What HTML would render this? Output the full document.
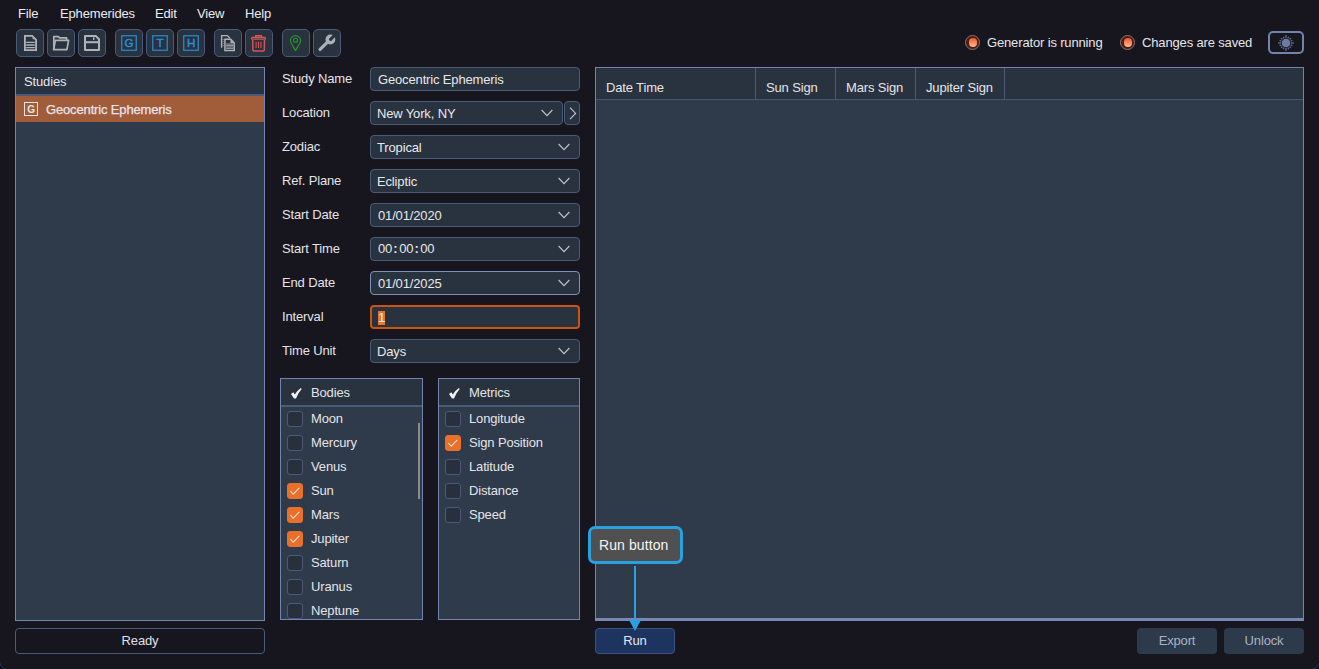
<!DOCTYPE html>
<html><head><meta charset="utf-8">
<style>
*{box-sizing:border-box;margin:0;padding:0}
html,body{width:1319px;height:669px;overflow:hidden;background:#17161e;font-family:"Liberation Sans",sans-serif;font-size:13px;color:#e6e6ea;letter-spacing:-0.15px}
.a{position:absolute}
.menu{top:6px;height:16px;line-height:16px;font-size:13px;color:#ececf0}
.tb{position:absolute;top:29px;width:28px;height:28px;border:1px solid #4b5a78;border-radius:5px;background:#29323f}
.tb svg{position:absolute;left:0;top:0}
.lbl{position:absolute;left:282px;font-size:13px;line-height:16px;color:#e4e4e8}
.inp{position:absolute;left:370px;width:210px;height:24px;border:1px solid #4b5a78;border-radius:4px;background:#29323f;font-size:13px;line-height:24px;padding-left:7px;color:#e8e8ec}
.chev{position:absolute;right:9px;top:7px}
.box{position:absolute;border:1px solid #7484b0;background:#2f3a4a}
.hdr{position:absolute;left:0;right:0;top:0;background:#29323f;border-bottom:2px solid #4b5a78}
.cb{position:absolute;width:16px;height:16px;border:1px solid #4b5a78;border-radius:3px;background:#27303c}
.cb.on{background:#e8702a;border-color:#e8702a}
.it{position:absolute;font-size:13px;line-height:16px;color:#e4e4e8}
.btn{position:absolute;top:628px;height:26px;border-radius:4px;text-align:center;line-height:24px;font-size:13px}
</style></head><body>
<!-- menu -->
<div class="a menu" style="left:18px">File</div>
<div class="a menu" style="left:60px">Ephemerides</div>
<div class="a menu" style="left:155px">Edit</div>
<div class="a menu" style="left:197px">View</div>
<div class="a menu" style="left:245px">Help</div>

<!-- toolbar -->
<div class="tb" style="left:16px"><svg width="28" height="28" viewBox="0 0 28 28"><path d="M7.9 5.9 H15.2 L19.1 9.8 V20.1 H7.9 Z" fill="none" stroke="#afb3b8" stroke-width="1.8" stroke-linejoin="miter"/><rect x="15.6" y="7.8" width="1.4" height="1.4" fill="#afb3b8"/><path d="M9.2 12.3 H17.8 M9.2 15 H17.8 M9.2 17.6 H17.8" stroke="#afb3b8" stroke-width="1.3"/></svg></div>
<div class="tb" style="left:47px"><svg width="28" height="28" viewBox="0 0 28 28"><path d="M5.8 19.5 V6.7 H10.4 L11.6 7.9 H18.6 V10" fill="none" stroke="#afb3b8" stroke-width="1.7" stroke-linejoin="round"/><path d="M5.6 19.6 L7.4 10.3 H20.6 L18.9 19.6 Z" fill="none" stroke="#afb3b8" stroke-width="1.7" stroke-linejoin="round"/></svg></div>
<div class="tb" style="left:78px"><svg width="28" height="28" viewBox="0 0 28 28"><path d="M6 6 H16.8 L20 9.2 V20 H6 Z" fill="none" stroke="#afb3b8" stroke-width="2" stroke-linejoin="round"/><path d="M6 12.2 H20" stroke="#afb3b8" stroke-width="2.1"/><rect x="14" y="7.3" width="1.4" height="2.7" fill="#afb3b8"/></svg></div>
<div class="tb" style="left:115px"><svg width="28" height="28" viewBox="0 0 28 28"><rect x="5.75" y="5.75" width="14.5" height="14.5" fill="none" stroke="#2b8cd6" stroke-width="1.2"/><text x="13" y="17.3" text-anchor="middle" font-family="Liberation Sans" font-size="11.6" fill="#2b8cd6" stroke="#2b8cd6" stroke-width="0.45">G</text></svg></div>
<div class="tb" style="left:146px"><svg width="28" height="28" viewBox="0 0 28 28"><rect x="5.75" y="5.75" width="14.5" height="14.5" fill="none" stroke="#2b8cd6" stroke-width="1.2"/><text x="13" y="17.3" text-anchor="middle" font-family="Liberation Sans" font-size="11.6" fill="#2b8cd6" stroke="#2b8cd6" stroke-width="0.45">T</text></svg></div>
<div class="tb" style="left:177px"><svg width="28" height="28" viewBox="0 0 28 28"><rect x="5.75" y="5.75" width="14.5" height="14.5" fill="none" stroke="#2b8cd6" stroke-width="1.2"/><text x="13" y="17.3" text-anchor="middle" font-family="Liberation Sans" font-size="11.6" fill="#2b8cd6" stroke="#2b8cd6" stroke-width="0.45">H</text></svg></div>
<div class="tb" style="left:214px"><svg width="28" height="28" viewBox="0 0 28 28"><path d="M6.6 17.8 V5.6 H12.3 L15 8.3" fill="none" stroke="#afb3b8" stroke-width="1.4"/><path d="M8.2 9 V16" stroke="#afb3b8" stroke-width="0.8" stroke-dasharray="0.9 1.1"/><path d="M9.9 9.2 H15.7 L19.2 12.7 V20.5 H9.9 Z" fill="#29333f" stroke="#afb3b8" stroke-width="1.45" stroke-linejoin="miter"/><path d="M15.5 9.5 L19 13 L15.5 13 Z" fill="#afb3b8"/><path d="M11.1 14 H18.3 M11.1 15.5 H18.3 M11.1 17 H18.3 M11.1 18.4 H18.3" stroke="#afb3b8" stroke-width="0.85"/></svg></div>
<div class="tb" style="left:245px"><svg width="28" height="28" viewBox="0 0 28 28"><rect x="5.55" y="7.4" width="14" height="1.75" rx="0.85" fill="none" stroke="#d4565a" stroke-width="1.3"/><path d="M9.7 7.1 V5.75 H15.5 V7.1" fill="none" stroke="#d4565a" stroke-width="1.3"/><path d="M6.7 9.9 L6.9 20 Q7 20.9 7.9 20.9 H17.3 Q18.2 20.9 18.3 20 L18.5 9.9" fill="none" stroke="#d4565a" stroke-width="1.5"/><path d="M10.1 11.8 V18 M12.5 11.8 V18 M14.9 11.8 V18" stroke="#d4565a" stroke-width="1.05"/></svg></div>
<div class="tb" style="left:282px"><svg width="28" height="28" viewBox="0 0 28 28"><path d="M12.5 20.6 L8.3 13.3 A4.95 4.95 0 1 1 16.7 13.3 Z" fill="none" stroke="#2a962a" stroke-width="1.15" stroke-linejoin="round"/><circle cx="12.5" cy="10.2" r="2" fill="none" stroke="#2a962a" stroke-width="1.1"/></svg></div>
<div class="tb" style="left:313px"><svg width="28" height="28" viewBox="0 0 28 28"><path d="M6.1 19.4 L14 11.6" stroke="#aab0b7" stroke-width="3.3" stroke-linecap="round"/><circle cx="16.4" cy="9.5" r="4.9" fill="#aab0b7"/><path d="M16.4 9.5 L21.5 4.4" stroke="#29333f" stroke-width="3"/><circle cx="16.6" cy="9.3" r="1.6" fill="#29333f"/></svg></div>

<!-- status -->
<div class="a" style="left:965px;top:35px;width:15px;height:15px;border-radius:50%;background:#4a1e14;border:1.3px solid #8c726c"></div>
<div class="a" style="left:968.5px;top:38.2px;width:8.4px;height:8.4px;border-radius:50%;background:linear-gradient(#f0582a,#ffb896)"></div>
<div class="a" style="left:987px;top:35px;line-height:16px">Generator is running</div>
<div class="a" style="left:1120px;top:35px;width:15px;height:15px;border-radius:50%;background:#4a1e14;border:1.3px solid #8c726c"></div>
<div class="a" style="left:1123.5px;top:38.2px;width:8.4px;height:8.4px;border-radius:50%;background:linear-gradient(#f0582a,#ffb896)"></div>
<div class="a" style="left:1142px;top:35px;line-height:16px">Changes are saved</div>
<div class="a" style="left:1268px;top:31px;width:36px;height:23px;border:2px solid #7184ac;border-radius:5px"></div>

<svg class="a" style="left:1276px;top:33px" width="20" height="20" viewBox="0 0 20 20"><circle cx="10" cy="10" r="4.3" fill="#6c7ca2"/><g stroke="#5e6c90" stroke-width="1.3"><line x1="15.00" y1="10.00" x2="18.00" y2="10.00"/><line x1="14.62" y1="11.91" x2="16.37" y2="12.64"/><line x1="13.54" y1="13.54" x2="14.88" y2="14.88"/><line x1="11.91" y1="14.62" x2="12.64" y2="16.37"/><line x1="10.00" y1="15.00" x2="10.00" y2="18.00"/><line x1="8.09" y1="14.62" x2="7.36" y2="16.37"/><line x1="6.46" y1="13.54" x2="5.12" y2="14.88"/><line x1="5.38" y1="11.91" x2="3.63" y2="12.64"/><line x1="5.00" y1="10.00" x2="2.00" y2="10.00"/><line x1="5.38" y1="8.09" x2="3.63" y2="7.36"/><line x1="6.46" y1="6.46" x2="5.12" y2="5.12"/><line x1="8.09" y1="5.38" x2="7.36" y2="3.63"/><line x1="10.00" y1="5.00" x2="10.00" y2="2.00"/><line x1="11.91" y1="5.38" x2="12.64" y2="3.63"/><line x1="13.54" y1="6.46" x2="14.88" y2="5.12"/><line x1="14.62" y1="8.09" x2="16.37" y2="7.36"/></g></svg>
<!-- studies -->
<div class="box" style="left:15px;top:67px;width:250px;height:554px">
  <div class="hdr" style="height:28px"></div>
</div>
<div class="a" style="left:24px;top:74px;line-height:16px">Studies</div>
<div class="a" style="left:16px;top:96px;width:248px;height:26px;background:#a15c3a"></div>
<div class="a" style="left:24px;top:102px;width:14px;height:14px;border:1px solid #ece4e0"></div><div class="a" style="left:27px;top:102px;width:8px;text-align:center;font-size:10px;font-weight:bold;line-height:16px;color:#ece4e0">G</div>
<div class="a" style="left:46px;top:102px;line-height:16px;color:#e8e4ee;-webkit-text-stroke:0.25px #e8e4ee">Geocentric Ephemeris</div>

<!-- form -->
<div class="lbl" style="top:71px">Study Name</div>
<div class="inp" style="top:67px">Geocentric Ephemeris</div>
<div class="lbl" style="top:105px">Location</div>
<div class="inp" style="top:101px;width:193px;padding-left:6px">New York, NY<svg class="chev" style="right:9px" width="12" height="8" viewBox="0 0 12 8"><path d="M0.6 1 L6 6.6 L11.4 1" fill="none" stroke="#c0c4cc" stroke-width="1.15"/></svg></div>
<div class="inp" style="top:101px;left:564px;width:16px;padding:0"><svg class="a" style="left:4px;top:5px" width="8" height="14" viewBox="0 0 8 14"><path d="M1 0.6 L6.6 6.4 L1 12.2" fill="none" stroke="#c0c4cc" stroke-width="1.15"/></svg></div>
<div class="lbl" style="top:139px">Zodiac</div>
<div class="inp" style="top:135px;padding-left:6px">Tropical<svg class="chev" width="12" height="8" viewBox="0 0 12 8"><path d="M0.6 1 L6 6.6 L11.4 1" fill="none" stroke="#c0c4cc" stroke-width="1.15"/></svg></div>
<div class="lbl" style="top:173px">Ref. Plane</div>
<div class="inp" style="top:169px;padding-left:6px">Ecliptic<svg class="chev" width="12" height="8" viewBox="0 0 12 8"><path d="M0.6 1 L6 6.6 L11.4 1" fill="none" stroke="#c0c4cc" stroke-width="1.15"/></svg></div>
<div class="lbl" style="top:207px">Start Date</div>
<div class="inp" style="top:203px">01/01/2020<svg class="chev" width="12" height="8" viewBox="0 0 12 8"><path d="M0.6 1 L6 6.6 L11.4 1" fill="none" stroke="#c0c4cc" stroke-width="1.15"/></svg></div>
<div class="lbl" style="top:241px">Start Time</div>
<div class="inp" style="top:237px"><span style="position:relative;top:-1px">00<span style="margin:0 1.6px 0 1.2px;font-weight:bold">:</span>00<span style="margin:0 1.6px 0 1.2px;font-weight:bold">:</span>00</span><svg class="chev" width="12" height="8" viewBox="0 0 12 8"><path d="M0.6 1 L6 6.6 L11.4 1" fill="none" stroke="#c0c4cc" stroke-width="1.15"/></svg></div>
<div class="lbl" style="top:275px">End Date</div>
<div class="inp" style="top:271px;border-color:#8090b8">01/01/2025<svg class="chev" width="12" height="8" viewBox="0 0 12 8"><path d="M0.6 1 L6 6.6 L11.4 1" fill="none" stroke="#c0c4cc" stroke-width="1.15"/></svg></div>
<div class="lbl" style="top:309px">Interval</div>
<div class="inp" style="top:305px;border:2px solid #c8560f"><div class="a" style="left:6px;top:4px;width:7px;height:14px;background:#e8732e"></div><div class="a" style="left:6px;top:3px;line-height:16px;color:#f0f0f0">1</div></div>
<div class="lbl" style="top:343px">Time Unit</div>
<div class="inp" style="top:339px;padding-left:6px">Days<svg class="chev" width="12" height="8" viewBox="0 0 12 8"><path d="M0.6 1 L6 6.6 L11.4 1" fill="none" stroke="#c0c4cc" stroke-width="1.15"/></svg></div>

<!-- bodies -->
<div class="box" style="left:280px;top:378px;width:143px;height:242px">
  <div class="hdr" style="height:28px"></div>
</div>
<div class="box" style="left:438px;top:378px;width:142px;height:242px">
  <div class="hdr" style="height:28px"></div>
</div>


<svg class="a" style="left:291px;top:388px" width="11" height="11" viewBox="0 0 11 11"><path d="M0 6 L2.3 4.3 L3.8 6.6 Q6.3 2.3 9.9 0 L10.7 1 Q7.4 4.4 5 10.4 L3 10.4 Z" fill="#f2f2f6"/></svg>
<div class="it" style="left:311px;top:385px">Bodies</div>
<svg class="a" style="left:449px;top:388px" width="11" height="11" viewBox="0 0 11 11"><path d="M0 6 L2.3 4.3 L3.8 6.6 Q6.3 2.3 9.9 0 L10.7 1 Q7.4 4.4 5 10.4 L3 10.4 Z" fill="#f2f2f6"/></svg>
<div class="it" style="left:469px;top:385px">Metrics</div>
<div class="a" style="left:418px;top:423px;width:2px;height:76px;background:#8a8a8c"></div>
<div class="cb" style="left:287px;top:411px"></div>
<div class="it" style="left:311px;top:411px">Moon</div>
<div class="cb" style="left:287px;top:435px"></div>
<div class="it" style="left:311px;top:435px">Mercury</div>
<div class="cb" style="left:287px;top:459px"></div>
<div class="it" style="left:311px;top:459px">Venus</div>
<div class="cb on" style="left:287px;top:483px"><svg class="a" style="left:0;top:0" width="14" height="14" viewBox="0 0 14 14"><path d="M2.4 7.2 L5.2 10.1 L11.3 3.8" fill="none" stroke="#f6dccc" stroke-width="1.1"/></svg></div>
<div class="it" style="left:311px;top:483px">Sun</div>
<div class="cb on" style="left:287px;top:507px"><svg class="a" style="left:0;top:0" width="14" height="14" viewBox="0 0 14 14"><path d="M2.4 7.2 L5.2 10.1 L11.3 3.8" fill="none" stroke="#f6dccc" stroke-width="1.1"/></svg></div>
<div class="it" style="left:311px;top:507px">Mars</div>
<div class="cb on" style="left:287px;top:531px"><svg class="a" style="left:0;top:0" width="14" height="14" viewBox="0 0 14 14"><path d="M2.4 7.2 L5.2 10.1 L11.3 3.8" fill="none" stroke="#f6dccc" stroke-width="1.1"/></svg></div>
<div class="it" style="left:311px;top:531px">Jupiter</div>
<div class="cb" style="left:287px;top:555px"></div>
<div class="it" style="left:311px;top:555px">Saturn</div>
<div class="cb" style="left:287px;top:579px"></div>
<div class="it" style="left:311px;top:579px">Uranus</div>
<div class="cb" style="left:287px;top:603px"></div>
<div class="it" style="left:311px;top:603px">Neptune</div>
<div class="cb" style="left:445px;top:411px"></div>
<div class="it" style="left:469px;top:411px">Longitude</div>
<div class="cb on" style="left:445px;top:435px"><svg class="a" style="left:0;top:0" width="14" height="14" viewBox="0 0 14 14"><path d="M2.4 7.2 L5.2 10.1 L11.3 3.8" fill="none" stroke="#f6dccc" stroke-width="1.1"/></svg></div>
<div class="it" style="left:469px;top:435px">Sign Position</div>
<div class="cb" style="left:445px;top:459px"></div>
<div class="it" style="left:469px;top:459px">Latitude</div>
<div class="cb" style="left:445px;top:483px"></div>
<div class="it" style="left:469px;top:483px">Distance</div>
<div class="cb" style="left:445px;top:507px"></div>
<div class="it" style="left:469px;top:507px">Speed</div>

<!-- table -->
<div class="box" style="left:595px;top:67px;width:709px;height:554px;border-bottom:3px solid #7888b6">
  <div class="hdr" style="height:32px;border-bottom:1px solid #4a5568"></div>
</div>


<div class="a" style="left:755px;top:68px;width:1px;height:32px;background:#4b5a78"></div>
<div class="a" style="left:835px;top:68px;width:1px;height:32px;background:#4b5a78"></div>
<div class="a" style="left:915px;top:68px;width:1px;height:32px;background:#4b5a78"></div>
<div class="a" style="left:1004px;top:68px;width:1px;height:32px;background:#4b5a78"></div>
<div class="it" style="left:606px;top:80px">Date Time</div>
<div class="it" style="left:766px;top:80px">Sun Sign</div>
<div class="it" style="left:846px;top:80px">Mars Sign</div>
<div class="it" style="left:926px;top:80px">Jupiter Sign</div>

<!-- bottom -->
<div class="btn" style="left:15px;width:250px;border:1px solid #4b5a78;color:#e0e0e6">Ready</div>
<div class="btn" style="left:595px;width:80px;border:1px solid #3b5382;background:#1d3461;color:#e6e6ee">Run</div>
<div class="btn" style="left:1137px;width:80px;background:#2d3a4b;color:#a9b3c2;line-height:26px">Export</div>
<div class="btn" style="left:1224px;width:80px;background:#2d3a4b;color:#a9b3c2;line-height:26px">Unlock</div>

<div class="a" style="left:588px;top:526px;width:95px;height:38px;border:3px solid #2aa0e0;border-radius:7px;background:#505050"></div>
<div class="a" style="left:599px;top:537px;line-height:16px;font-size:14px;letter-spacing:0.1px;color:#f4f4f4">Run button</div>
<div class="a" style="left:634px;top:566px;width:2px;height:56px;background:#2aa0e0"></div>
<svg class="a" style="left:629px;top:620px" width="12" height="11" viewBox="0 0 12 11"><path d="M0 0 L12 0 L6 11 Z" fill="#2aa0e0"/></svg>

<svg class="a" style="left:0;top:659px" width="10" height="10" viewBox="0 0 10 10"><path d="M0 3.6 A6.4 6.4 0 0 0 6.4 10 L0 10 Z" fill="#050a24"/><path d="M0 3.6 A6.4 6.4 0 0 0 6.4 10" fill="none" stroke="#33364a" stroke-width="0.9"/></svg>
<svg class="a" style="left:1309px;top:659px" width="10" height="10" viewBox="0 0 10 10"><path d="M10 3.6 A6.4 6.4 0 0 1 3.6 10 L10 10 Z" fill="#050a24"/><path d="M10 3.6 A6.4 6.4 0 0 1 3.6 10" fill="none" stroke="#33364a" stroke-width="0.9"/></svg>
</body></html>
